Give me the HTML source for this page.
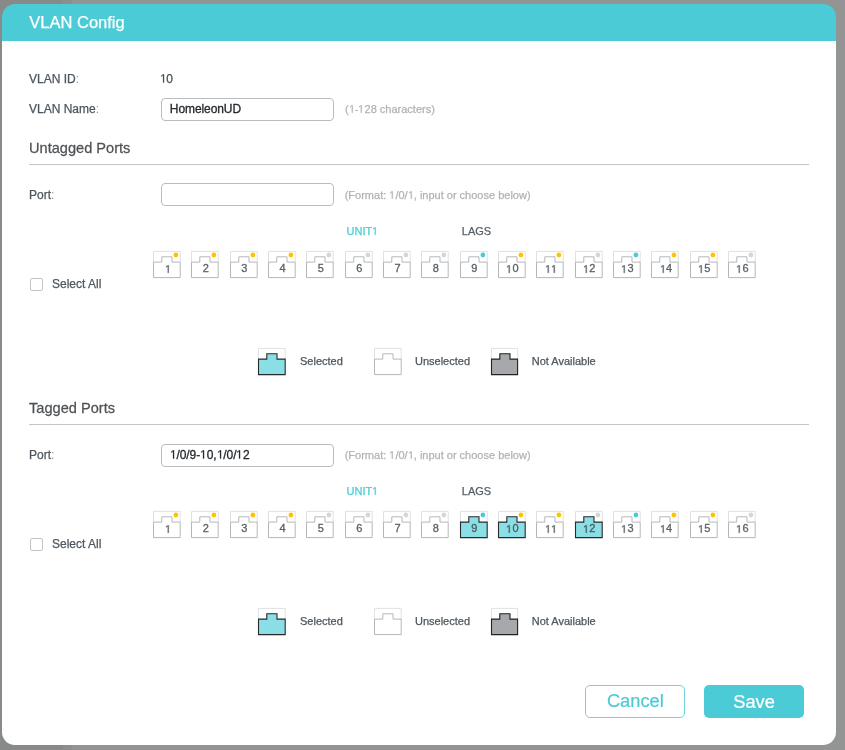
<!DOCTYPE html>
<html><head><meta charset="utf-8"><style>
html,body{margin:0;padding:0;width:845px;height:750px;overflow:hidden;background:#939594;font-family:"Liberation Sans",sans-serif}
.bgl{position:absolute;left:0;top:0;width:63px;height:750px;background:#888a89}
.bgm{position:absolute;left:63px;top:0;width:9px;height:750px;background:#8d8f8e}
.dlg{position:absolute;left:1.8px;top:4px;width:834.4px;height:741.3px}
.hdr{position:absolute;left:0;top:0;right:0;height:36.5px;background:#4acbd6;border-radius:13px 13px 0 0}
.bod{position:absolute;left:0;top:36.5px;right:0;bottom:0;background:#fff;border-radius:0 0 13px 13px}
.abs{position:absolute;left:0;top:0;width:845px;height:750px;will-change:transform}
.t{position:absolute;white-space:nowrap;line-height:1;-webkit-text-stroke:0.25px currentColor}
.title{font-size:16.5px;color:#fff}
.lbl{font-size:12px;color:#4d565e}
.val{font-size:12px;color:#434e56}
.head{font-size:14.6px;color:#4f5255;transform:scaleY(1.04);transform-origin:0 12.4px}
.hint{font-size:11px;color:#b0b3b6}
.unit{font-size:11px;color:#4acbd6}
.lags{font-size:11px;color:#555e66}
.leg{font-size:11px;color:#4d565e}
.line{position:absolute;left:29px;width:779.5px;height:1px;background:#c3c6c8}
.inp{position:absolute;left:161px;width:171px;height:21.2px;border:1px solid #b9bcbf;border-radius:4px;background:#fff}
.inp span{letter-spacing:-0.08px;-webkit-text-stroke:0.3px currentColor;position:absolute;left:7.8px;top:4.3px;font-size:12px;line-height:1;color:#252a2e;white-space:nowrap}
.cb{position:absolute;left:30px;width:10.5px;height:10.5px;border:1px solid #c2c5c8;border-radius:2px}
.p{position:absolute;overflow:visible}
.col{color:#8d959b;-webkit-text-stroke:0}
.pn{width:31.4px;text-align:center;font-size:11px;-webkit-text-stroke:0.3px currentColor}
.one{display:inline-block;vertical-align:baseline;overflow:visible}
.btn{position:absolute;top:685px;height:32.6px;border-radius:5px;box-sizing:border-box;font-size:18.3px;line-height:34.2px;text-align:center;-webkit-text-stroke:0.2px currentColor;text-indent:0.6px}
.cancel{line-height:30.4px;left:585.3px;width:99.5px;border:1.4px solid #6fd3dc;color:#4acbd6;background:#fff}
.save{left:703.7px;width:100.2px;background:#4acbd6;color:#fff}
</style></head><body>
<div class="bgl"></div><div class="bgm"></div>
<div class="dlg"><div class="hdr"></div><div class="bod"></div></div>
<div class="abs">
<div class="t title" style="left:29.3px;top:14px">VLAN Config</div>
<div class="t lbl" style="left:29px;top:73px">VLAN ID<span class="col">:</span></div>
<div class="t val" style="left:159.5px;top:73px"><svg class="one" viewBox="0 0 1139 1466" style="width:0.5562em;height:0.7158em"><path transform="matrix(1 0 0 -1 0 1466)" d="M515,0 L515,1237 L197,1010 L197,1180 L530,1409 L696,1409 L696,0 Z" fill="currentColor" stroke="currentColor" stroke-width="42.7"/></svg>0</div>
<div class="t lbl" style="left:29px;top:103px">VLAN Name<span class="col">:</span></div>
<div class="inp" style="top:98px"><span>HomeleonUD</span></div>
<div class="t hint" style="left:345px;top:103.7px">(<svg class="one" viewBox="0 0 1139 1466" style="width:0.5562em;height:0.7158em"><path transform="matrix(1 0 0 -1 0 1466)" d="M515,0 L515,1237 L197,1010 L197,1180 L530,1409 L696,1409 L696,0 Z" fill="currentColor" stroke="currentColor" stroke-width="46.5"/></svg>-<svg class="one" viewBox="0 0 1139 1466" style="width:0.5562em;height:0.7158em"><path transform="matrix(1 0 0 -1 0 1466)" d="M515,0 L515,1237 L197,1010 L197,1180 L530,1409 L696,1409 L696,0 Z" fill="currentColor" stroke="currentColor" stroke-width="46.5"/></svg>28 characters)</div>
<div class="t head" style="left:29px;top:141.3px">Untagged Ports</div><div class="line" style="top:164px"></div><div class="t lbl" style="left:29px;top:189px">Port<span class="col">:</span></div><div class="inp" style="top:183px"><span></span></div><div class="t hint" style="left:344.7px;top:189.5px">(Format: <svg class="one" viewBox="0 0 1139 1466" style="width:0.5562em;height:0.7158em"><path transform="matrix(1 0 0 -1 0 1466)" d="M515,0 L515,1237 L197,1010 L197,1180 L530,1409 L696,1409 L696,0 Z" fill="currentColor" stroke="currentColor" stroke-width="46.5"/></svg>/0/<svg class="one" viewBox="0 0 1139 1466" style="width:0.5562em;height:0.7158em"><path transform="matrix(1 0 0 -1 0 1466)" d="M515,0 L515,1237 L197,1010 L197,1180 L530,1409 L696,1409 L696,0 Z" fill="currentColor" stroke="currentColor" stroke-width="46.5"/></svg>, input or choose below)</div><div class="t unit" style="left:346.6px;top:225.8px">UNIT<svg class="one" viewBox="0 0 1139 1466" style="width:0.5562em;height:0.7158em"><path transform="matrix(1 0 0 -1 0 1466)" d="M515,0 L515,1237 L197,1010 L197,1180 L530,1409 L696,1409 L696,0 Z" fill="currentColor" stroke="currentColor" stroke-width="46.5"/></svg></div><div class="t lags" style="left:461.8px;top:225.8px">LAGS</div><svg class="p" style="left:151.90px;top:249.90px" width="30" height="30" viewBox="0 0 30 30"><path d="M1.5,12.1 V1.4 H28.2 V12.1" fill="none" stroke="#dfe1e3" stroke-width="1"/><path d="M1.5,12.1 H9.8 V6.8 H20.0 V12.1 H28.2 V27.6 H1.5 Z" fill="#ffffff" stroke="#b4b7ba" stroke-width="1.0"/><circle cx="23.9" cy="5.0" r="2.4" fill="#ffc400"/></svg><div class="t pn" style="left:151.90px;top:263.39px;color:#5a6268"><svg class="one" viewBox="0 0 1139 1466" style="width:0.5562em;height:0.7158em"><path transform="matrix(1 0 0 -1 0 1466)" d="M515,0 L515,1237 L197,1010 L197,1180 L530,1409 L696,1409 L696,0 Z" fill="currentColor" stroke="currentColor" stroke-width="55.9"/></svg></div><svg class="p" style="left:190.23px;top:249.90px" width="30" height="30" viewBox="0 0 30 30"><path d="M1.5,12.1 V1.4 H28.2 V12.1" fill="none" stroke="#dfe1e3" stroke-width="1"/><path d="M1.5,12.1 H9.8 V6.8 H20.0 V12.1 H28.2 V27.6 H1.5 Z" fill="#ffffff" stroke="#b4b7ba" stroke-width="1.0"/><circle cx="23.9" cy="5.0" r="2.4" fill="#ffc400"/></svg><div class="t pn" style="left:190.23px;top:263.39px;color:#5a6268">2</div><svg class="p" style="left:228.56px;top:249.90px" width="30" height="30" viewBox="0 0 30 30"><path d="M1.5,12.1 V1.4 H28.2 V12.1" fill="none" stroke="#dfe1e3" stroke-width="1"/><path d="M1.5,12.1 H9.8 V6.8 H20.0 V12.1 H28.2 V27.6 H1.5 Z" fill="#ffffff" stroke="#b4b7ba" stroke-width="1.0"/><circle cx="23.9" cy="5.0" r="2.4" fill="#ffc400"/></svg><div class="t pn" style="left:228.56px;top:263.39px;color:#5a6268">3</div><svg class="p" style="left:266.89px;top:249.90px" width="30" height="30" viewBox="0 0 30 30"><path d="M1.5,12.1 V1.4 H28.2 V12.1" fill="none" stroke="#dfe1e3" stroke-width="1"/><path d="M1.5,12.1 H9.8 V6.8 H20.0 V12.1 H28.2 V27.6 H1.5 Z" fill="#ffffff" stroke="#b4b7ba" stroke-width="1.0"/><circle cx="23.9" cy="5.0" r="2.4" fill="#ffc400"/></svg><div class="t pn" style="left:266.89px;top:263.39px;color:#5a6268">4</div><svg class="p" style="left:305.22px;top:249.90px" width="30" height="30" viewBox="0 0 30 30"><path d="M1.5,12.1 V1.4 H28.2 V12.1" fill="none" stroke="#dfe1e3" stroke-width="1"/><path d="M1.5,12.1 H9.8 V6.8 H20.0 V12.1 H28.2 V27.6 H1.5 Z" fill="#ffffff" stroke="#b4b7ba" stroke-width="1.0"/><circle cx="23.9" cy="5.0" r="2.4" fill="#d6d6d6"/></svg><div class="t pn" style="left:305.22px;top:263.39px;color:#5a6268">5</div><svg class="p" style="left:343.55px;top:249.90px" width="30" height="30" viewBox="0 0 30 30"><path d="M1.5,12.1 V1.4 H28.2 V12.1" fill="none" stroke="#dfe1e3" stroke-width="1"/><path d="M1.5,12.1 H9.8 V6.8 H20.0 V12.1 H28.2 V27.6 H1.5 Z" fill="#ffffff" stroke="#b4b7ba" stroke-width="1.0"/><circle cx="23.9" cy="5.0" r="2.4" fill="#d6d6d6"/></svg><div class="t pn" style="left:343.55px;top:263.39px;color:#5a6268">6</div><svg class="p" style="left:381.88px;top:249.90px" width="30" height="30" viewBox="0 0 30 30"><path d="M1.5,12.1 V1.4 H28.2 V12.1" fill="none" stroke="#dfe1e3" stroke-width="1"/><path d="M1.5,12.1 H9.8 V6.8 H20.0 V12.1 H28.2 V27.6 H1.5 Z" fill="#ffffff" stroke="#b4b7ba" stroke-width="1.0"/><circle cx="23.9" cy="5.0" r="2.4" fill="#d6d6d6"/></svg><div class="t pn" style="left:381.88px;top:263.39px;color:#5a6268">7</div><svg class="p" style="left:420.21px;top:249.90px" width="30" height="30" viewBox="0 0 30 30"><path d="M1.5,12.1 V1.4 H28.2 V12.1" fill="none" stroke="#dfe1e3" stroke-width="1"/><path d="M1.5,12.1 H9.8 V6.8 H20.0 V12.1 H28.2 V27.6 H1.5 Z" fill="#ffffff" stroke="#b4b7ba" stroke-width="1.0"/><circle cx="23.9" cy="5.0" r="2.4" fill="#d6d6d6"/></svg><div class="t pn" style="left:420.21px;top:263.39px;color:#5a6268">8</div><svg class="p" style="left:458.54px;top:249.90px" width="30" height="30" viewBox="0 0 30 30"><path d="M1.5,12.1 V1.4 H28.2 V12.1" fill="none" stroke="#dfe1e3" stroke-width="1"/><path d="M1.5,12.1 H9.8 V6.8 H20.0 V12.1 H28.2 V27.6 H1.5 Z" fill="#ffffff" stroke="#b4b7ba" stroke-width="1.0"/><circle cx="23.9" cy="5.0" r="2.4" fill="#4acbd6"/></svg><div class="t pn" style="left:458.54px;top:263.39px;color:#5a6268">9</div><svg class="p" style="left:496.87px;top:249.90px" width="30" height="30" viewBox="0 0 30 30"><path d="M1.5,12.1 V1.4 H28.2 V12.1" fill="none" stroke="#dfe1e3" stroke-width="1"/><path d="M1.5,12.1 H9.8 V6.8 H20.0 V12.1 H28.2 V27.6 H1.5 Z" fill="#ffffff" stroke="#b4b7ba" stroke-width="1.0"/><circle cx="23.9" cy="5.0" r="2.4" fill="#ffc400"/></svg><div class="t pn" style="left:496.87px;top:263.39px;color:#5a6268"><svg class="one" viewBox="0 0 1139 1466" style="width:0.5562em;height:0.7158em"><path transform="matrix(1 0 0 -1 0 1466)" d="M515,0 L515,1237 L197,1010 L197,1180 L530,1409 L696,1409 L696,0 Z" fill="currentColor" stroke="currentColor" stroke-width="55.9"/></svg>0</div><svg class="p" style="left:535.20px;top:249.90px" width="30" height="30" viewBox="0 0 30 30"><path d="M1.5,12.1 V1.4 H28.2 V12.1" fill="none" stroke="#dfe1e3" stroke-width="1"/><path d="M1.5,12.1 H9.8 V6.8 H20.0 V12.1 H28.2 V27.6 H1.5 Z" fill="#ffffff" stroke="#b4b7ba" stroke-width="1.0"/><circle cx="23.9" cy="5.0" r="2.4" fill="#ffc400"/></svg><div class="t pn" style="left:535.20px;top:263.39px;color:#5a6268"><svg class="one" viewBox="0 0 1139 1466" style="width:0.5562em;height:0.7158em"><path transform="matrix(1 0 0 -1 0 1466)" d="M515,0 L515,1237 L197,1010 L197,1180 L530,1409 L696,1409 L696,0 Z" fill="currentColor" stroke="currentColor" stroke-width="55.9"/></svg><svg class="one" viewBox="0 0 1139 1466" style="width:0.5562em;height:0.7158em"><path transform="matrix(1 0 0 -1 0 1466)" d="M515,0 L515,1237 L197,1010 L197,1180 L530,1409 L696,1409 L696,0 Z" fill="currentColor" stroke="currentColor" stroke-width="55.9"/></svg></div><svg class="p" style="left:573.53px;top:249.90px" width="30" height="30" viewBox="0 0 30 30"><path d="M1.5,12.1 V1.4 H28.2 V12.1" fill="none" stroke="#dfe1e3" stroke-width="1"/><path d="M1.5,12.1 H9.8 V6.8 H20.0 V12.1 H28.2 V27.6 H1.5 Z" fill="#ffffff" stroke="#b4b7ba" stroke-width="1.0"/><circle cx="23.9" cy="5.0" r="2.4" fill="#d6d6d6"/></svg><div class="t pn" style="left:573.53px;top:263.39px;color:#5a6268"><svg class="one" viewBox="0 0 1139 1466" style="width:0.5562em;height:0.7158em"><path transform="matrix(1 0 0 -1 0 1466)" d="M515,0 L515,1237 L197,1010 L197,1180 L530,1409 L696,1409 L696,0 Z" fill="currentColor" stroke="currentColor" stroke-width="55.9"/></svg>2</div><svg class="p" style="left:611.86px;top:249.90px" width="30" height="30" viewBox="0 0 30 30"><path d="M1.5,12.1 V1.4 H28.2 V12.1" fill="none" stroke="#dfe1e3" stroke-width="1"/><path d="M1.5,12.1 H9.8 V6.8 H20.0 V12.1 H28.2 V27.6 H1.5 Z" fill="#ffffff" stroke="#b4b7ba" stroke-width="1.0"/><circle cx="23.9" cy="5.0" r="2.4" fill="#4acbd6"/></svg><div class="t pn" style="left:611.86px;top:263.39px;color:#5a6268"><svg class="one" viewBox="0 0 1139 1466" style="width:0.5562em;height:0.7158em"><path transform="matrix(1 0 0 -1 0 1466)" d="M515,0 L515,1237 L197,1010 L197,1180 L530,1409 L696,1409 L696,0 Z" fill="currentColor" stroke="currentColor" stroke-width="55.9"/></svg>3</div><svg class="p" style="left:650.19px;top:249.90px" width="30" height="30" viewBox="0 0 30 30"><path d="M1.5,12.1 V1.4 H28.2 V12.1" fill="none" stroke="#dfe1e3" stroke-width="1"/><path d="M1.5,12.1 H9.8 V6.8 H20.0 V12.1 H28.2 V27.6 H1.5 Z" fill="#ffffff" stroke="#b4b7ba" stroke-width="1.0"/><circle cx="23.9" cy="5.0" r="2.4" fill="#ffc400"/></svg><div class="t pn" style="left:650.19px;top:263.39px;color:#5a6268"><svg class="one" viewBox="0 0 1139 1466" style="width:0.5562em;height:0.7158em"><path transform="matrix(1 0 0 -1 0 1466)" d="M515,0 L515,1237 L197,1010 L197,1180 L530,1409 L696,1409 L696,0 Z" fill="currentColor" stroke="currentColor" stroke-width="55.9"/></svg>4</div><svg class="p" style="left:688.52px;top:249.90px" width="30" height="30" viewBox="0 0 30 30"><path d="M1.5,12.1 V1.4 H28.2 V12.1" fill="none" stroke="#dfe1e3" stroke-width="1"/><path d="M1.5,12.1 H9.8 V6.8 H20.0 V12.1 H28.2 V27.6 H1.5 Z" fill="#ffffff" stroke="#b4b7ba" stroke-width="1.0"/><circle cx="23.9" cy="5.0" r="2.4" fill="#ffc400"/></svg><div class="t pn" style="left:688.52px;top:263.39px;color:#5a6268"><svg class="one" viewBox="0 0 1139 1466" style="width:0.5562em;height:0.7158em"><path transform="matrix(1 0 0 -1 0 1466)" d="M515,0 L515,1237 L197,1010 L197,1180 L530,1409 L696,1409 L696,0 Z" fill="currentColor" stroke="currentColor" stroke-width="55.9"/></svg>5</div><svg class="p" style="left:726.85px;top:249.90px" width="30" height="30" viewBox="0 0 30 30"><path d="M1.5,12.1 V1.4 H28.2 V12.1" fill="none" stroke="#dfe1e3" stroke-width="1"/><path d="M1.5,12.1 H9.8 V6.8 H20.0 V12.1 H28.2 V27.6 H1.5 Z" fill="#ffffff" stroke="#b4b7ba" stroke-width="1.0"/><circle cx="23.9" cy="5.0" r="2.4" fill="#d6d6d6"/></svg><div class="t pn" style="left:726.85px;top:263.39px;color:#5a6268"><svg class="one" viewBox="0 0 1139 1466" style="width:0.5562em;height:0.7158em"><path transform="matrix(1 0 0 -1 0 1466)" d="M515,0 L515,1237 L197,1010 L197,1180 L530,1409 L696,1409 L696,0 Z" fill="currentColor" stroke="currentColor" stroke-width="55.9"/></svg>6</div><div class="cb" style="top:278px"></div><div class="t lbl" style="left:52px;top:278.4px">Select All</div><svg class="p" style="left:256.90px;top:346.50px" width="30" height="30" viewBox="0 0 30 30"><path d="M1.5,12.1 V1.4 H28.2 V12.1" fill="none" stroke="#dfe1e3" stroke-width="1"/><path d="M1.5,12.1 H9.8 V6.8 H20.0 V12.1 H28.2 V27.6 H1.5 Z" fill="#8adfe6" stroke="#2a2a2a" stroke-width="1.1"/></svg><div class="t leg" style="left:300px;top:355.5px">Selected</div><svg class="p" style="left:372.90px;top:346.50px" width="30" height="30" viewBox="0 0 30 30"><path d="M1.5,12.1 V1.4 H28.2 V12.1" fill="none" stroke="#dfe1e3" stroke-width="1"/><path d="M1.5,12.1 H9.8 V6.8 H20.0 V12.1 H28.2 V27.6 H1.5 Z" fill="#ffffff" stroke="#b4b7ba" stroke-width="1.0"/></svg><div class="t leg" style="left:415px;top:355.5px">Unselected</div><svg class="p" style="left:489.90px;top:346.50px" width="30" height="30" viewBox="0 0 30 30"><path d="M1.5,12.1 V1.4 H27.6 V12.1" fill="none" stroke="#dfe1e3" stroke-width="1"/><path d="M1.5,12.1 H9.8 V6.8 H20.0 V12.1 H27.6 V27.6 H1.5 Z" fill="#a7a8ab" stroke="#222" stroke-width="1.1"/></svg><div class="t leg" style="left:531.7px;top:355.5px">Not Available</div>
<div class="t head" style="left:29px;top:401.3px">Tagged Ports</div><div class="line" style="top:424px"></div><div class="t lbl" style="left:29px;top:449px">Port<span class="col">:</span></div><div class="inp" style="top:443.5px"><span><svg class="one" viewBox="0 0 1139 1466" style="width:0.5562em;height:0.7158em"><path transform="matrix(1 0 0 -1 0 1466)" d="M515,0 L515,1237 L197,1010 L197,1180 L530,1409 L696,1409 L696,0 Z" fill="currentColor" stroke="currentColor" stroke-width="42.7"/></svg>/0/9-<svg class="one" viewBox="0 0 1139 1466" style="width:0.5562em;height:0.7158em"><path transform="matrix(1 0 0 -1 0 1466)" d="M515,0 L515,1237 L197,1010 L197,1180 L530,1409 L696,1409 L696,0 Z" fill="currentColor" stroke="currentColor" stroke-width="42.7"/></svg>0,<svg class="one" viewBox="0 0 1139 1466" style="width:0.5562em;height:0.7158em"><path transform="matrix(1 0 0 -1 0 1466)" d="M515,0 L515,1237 L197,1010 L197,1180 L530,1409 L696,1409 L696,0 Z" fill="currentColor" stroke="currentColor" stroke-width="42.7"/></svg>/0/<svg class="one" viewBox="0 0 1139 1466" style="width:0.5562em;height:0.7158em"><path transform="matrix(1 0 0 -1 0 1466)" d="M515,0 L515,1237 L197,1010 L197,1180 L530,1409 L696,1409 L696,0 Z" fill="currentColor" stroke="currentColor" stroke-width="42.7"/></svg>2</span></div><div class="t hint" style="left:344.7px;top:449.5px">(Format: <svg class="one" viewBox="0 0 1139 1466" style="width:0.5562em;height:0.7158em"><path transform="matrix(1 0 0 -1 0 1466)" d="M515,0 L515,1237 L197,1010 L197,1180 L530,1409 L696,1409 L696,0 Z" fill="currentColor" stroke="currentColor" stroke-width="46.5"/></svg>/0/<svg class="one" viewBox="0 0 1139 1466" style="width:0.5562em;height:0.7158em"><path transform="matrix(1 0 0 -1 0 1466)" d="M515,0 L515,1237 L197,1010 L197,1180 L530,1409 L696,1409 L696,0 Z" fill="currentColor" stroke="currentColor" stroke-width="46.5"/></svg>, input or choose below)</div><div class="t unit" style="left:346.6px;top:485.8px">UNIT<svg class="one" viewBox="0 0 1139 1466" style="width:0.5562em;height:0.7158em"><path transform="matrix(1 0 0 -1 0 1466)" d="M515,0 L515,1237 L197,1010 L197,1180 L530,1409 L696,1409 L696,0 Z" fill="currentColor" stroke="currentColor" stroke-width="46.5"/></svg></div><div class="t lags" style="left:461.8px;top:485.8px">LAGS</div><svg class="p" style="left:151.90px;top:509.90px" width="30" height="30" viewBox="0 0 30 30"><path d="M1.5,12.1 V1.4 H28.2 V12.1" fill="none" stroke="#dfe1e3" stroke-width="1"/><path d="M1.5,12.1 H9.8 V6.8 H20.0 V12.1 H28.2 V27.6 H1.5 Z" fill="#ffffff" stroke="#b4b7ba" stroke-width="1.0"/><circle cx="23.9" cy="5.0" r="2.4" fill="#ffc400"/></svg><div class="t pn" style="left:151.90px;top:523.39px;color:#5a6268"><svg class="one" viewBox="0 0 1139 1466" style="width:0.5562em;height:0.7158em"><path transform="matrix(1 0 0 -1 0 1466)" d="M515,0 L515,1237 L197,1010 L197,1180 L530,1409 L696,1409 L696,0 Z" fill="currentColor" stroke="currentColor" stroke-width="55.9"/></svg></div><svg class="p" style="left:190.23px;top:509.90px" width="30" height="30" viewBox="0 0 30 30"><path d="M1.5,12.1 V1.4 H28.2 V12.1" fill="none" stroke="#dfe1e3" stroke-width="1"/><path d="M1.5,12.1 H9.8 V6.8 H20.0 V12.1 H28.2 V27.6 H1.5 Z" fill="#ffffff" stroke="#b4b7ba" stroke-width="1.0"/><circle cx="23.9" cy="5.0" r="2.4" fill="#ffc400"/></svg><div class="t pn" style="left:190.23px;top:523.39px;color:#5a6268">2</div><svg class="p" style="left:228.56px;top:509.90px" width="30" height="30" viewBox="0 0 30 30"><path d="M1.5,12.1 V1.4 H28.2 V12.1" fill="none" stroke="#dfe1e3" stroke-width="1"/><path d="M1.5,12.1 H9.8 V6.8 H20.0 V12.1 H28.2 V27.6 H1.5 Z" fill="#ffffff" stroke="#b4b7ba" stroke-width="1.0"/><circle cx="23.9" cy="5.0" r="2.4" fill="#ffc400"/></svg><div class="t pn" style="left:228.56px;top:523.39px;color:#5a6268">3</div><svg class="p" style="left:266.89px;top:509.90px" width="30" height="30" viewBox="0 0 30 30"><path d="M1.5,12.1 V1.4 H28.2 V12.1" fill="none" stroke="#dfe1e3" stroke-width="1"/><path d="M1.5,12.1 H9.8 V6.8 H20.0 V12.1 H28.2 V27.6 H1.5 Z" fill="#ffffff" stroke="#b4b7ba" stroke-width="1.0"/><circle cx="23.9" cy="5.0" r="2.4" fill="#ffc400"/></svg><div class="t pn" style="left:266.89px;top:523.39px;color:#5a6268">4</div><svg class="p" style="left:305.22px;top:509.90px" width="30" height="30" viewBox="0 0 30 30"><path d="M1.5,12.1 V1.4 H28.2 V12.1" fill="none" stroke="#dfe1e3" stroke-width="1"/><path d="M1.5,12.1 H9.8 V6.8 H20.0 V12.1 H28.2 V27.6 H1.5 Z" fill="#ffffff" stroke="#b4b7ba" stroke-width="1.0"/><circle cx="23.9" cy="5.0" r="2.4" fill="#d6d6d6"/></svg><div class="t pn" style="left:305.22px;top:523.39px;color:#5a6268">5</div><svg class="p" style="left:343.55px;top:509.90px" width="30" height="30" viewBox="0 0 30 30"><path d="M1.5,12.1 V1.4 H28.2 V12.1" fill="none" stroke="#dfe1e3" stroke-width="1"/><path d="M1.5,12.1 H9.8 V6.8 H20.0 V12.1 H28.2 V27.6 H1.5 Z" fill="#ffffff" stroke="#b4b7ba" stroke-width="1.0"/><circle cx="23.9" cy="5.0" r="2.4" fill="#d6d6d6"/></svg><div class="t pn" style="left:343.55px;top:523.39px;color:#5a6268">6</div><svg class="p" style="left:381.88px;top:509.90px" width="30" height="30" viewBox="0 0 30 30"><path d="M1.5,12.1 V1.4 H28.2 V12.1" fill="none" stroke="#dfe1e3" stroke-width="1"/><path d="M1.5,12.1 H9.8 V6.8 H20.0 V12.1 H28.2 V27.6 H1.5 Z" fill="#ffffff" stroke="#b4b7ba" stroke-width="1.0"/><circle cx="23.9" cy="5.0" r="2.4" fill="#d6d6d6"/></svg><div class="t pn" style="left:381.88px;top:523.39px;color:#5a6268">7</div><svg class="p" style="left:420.21px;top:509.90px" width="30" height="30" viewBox="0 0 30 30"><path d="M1.5,12.1 V1.4 H28.2 V12.1" fill="none" stroke="#dfe1e3" stroke-width="1"/><path d="M1.5,12.1 H9.8 V6.8 H20.0 V12.1 H28.2 V27.6 H1.5 Z" fill="#ffffff" stroke="#b4b7ba" stroke-width="1.0"/><circle cx="23.9" cy="5.0" r="2.4" fill="#d6d6d6"/></svg><div class="t pn" style="left:420.21px;top:523.39px;color:#5a6268">8</div><svg class="p" style="left:458.54px;top:509.90px" width="30" height="30" viewBox="0 0 30 30"><path d="M1.5,12.1 V1.4 H28.2 V12.1" fill="none" stroke="#dfe1e3" stroke-width="1"/><path d="M1.5,12.1 H9.8 V6.8 H20.0 V12.1 H28.2 V27.6 H1.5 Z" fill="#8adfe6" stroke="#2a2a2a" stroke-width="1.1"/><circle cx="23.9" cy="5.0" r="2.4" fill="#4acbd6"/></svg><div class="t pn" style="left:458.54px;top:523.39px;color:#4a5a60">9</div><svg class="p" style="left:496.87px;top:509.90px" width="30" height="30" viewBox="0 0 30 30"><path d="M1.5,12.1 V1.4 H28.2 V12.1" fill="none" stroke="#dfe1e3" stroke-width="1"/><path d="M1.5,12.1 H9.8 V6.8 H20.0 V12.1 H28.2 V27.6 H1.5 Z" fill="#8adfe6" stroke="#2a2a2a" stroke-width="1.1"/><circle cx="23.9" cy="5.0" r="2.4" fill="#ffc400"/></svg><div class="t pn" style="left:496.87px;top:523.39px;color:#4a5a60"><svg class="one" viewBox="0 0 1139 1466" style="width:0.5562em;height:0.7158em"><path transform="matrix(1 0 0 -1 0 1466)" d="M515,0 L515,1237 L197,1010 L197,1180 L530,1409 L696,1409 L696,0 Z" fill="currentColor" stroke="currentColor" stroke-width="55.9"/></svg>0</div><svg class="p" style="left:535.20px;top:509.90px" width="30" height="30" viewBox="0 0 30 30"><path d="M1.5,12.1 V1.4 H28.2 V12.1" fill="none" stroke="#dfe1e3" stroke-width="1"/><path d="M1.5,12.1 H9.8 V6.8 H20.0 V12.1 H28.2 V27.6 H1.5 Z" fill="#ffffff" stroke="#b4b7ba" stroke-width="1.0"/><circle cx="23.9" cy="5.0" r="2.4" fill="#ffc400"/></svg><div class="t pn" style="left:535.20px;top:523.39px;color:#5a6268"><svg class="one" viewBox="0 0 1139 1466" style="width:0.5562em;height:0.7158em"><path transform="matrix(1 0 0 -1 0 1466)" d="M515,0 L515,1237 L197,1010 L197,1180 L530,1409 L696,1409 L696,0 Z" fill="currentColor" stroke="currentColor" stroke-width="55.9"/></svg><svg class="one" viewBox="0 0 1139 1466" style="width:0.5562em;height:0.7158em"><path transform="matrix(1 0 0 -1 0 1466)" d="M515,0 L515,1237 L197,1010 L197,1180 L530,1409 L696,1409 L696,0 Z" fill="currentColor" stroke="currentColor" stroke-width="55.9"/></svg></div><svg class="p" style="left:573.53px;top:509.90px" width="30" height="30" viewBox="0 0 30 30"><path d="M1.5,12.1 V1.4 H28.2 V12.1" fill="none" stroke="#dfe1e3" stroke-width="1"/><path d="M1.5,12.1 H9.8 V6.8 H20.0 V12.1 H28.2 V27.6 H1.5 Z" fill="#8adfe6" stroke="#2a2a2a" stroke-width="1.1"/><circle cx="23.9" cy="5.0" r="2.4" fill="#d6d6d6"/></svg><div class="t pn" style="left:573.53px;top:523.39px;color:#4a5a60"><svg class="one" viewBox="0 0 1139 1466" style="width:0.5562em;height:0.7158em"><path transform="matrix(1 0 0 -1 0 1466)" d="M515,0 L515,1237 L197,1010 L197,1180 L530,1409 L696,1409 L696,0 Z" fill="currentColor" stroke="currentColor" stroke-width="55.9"/></svg>2</div><svg class="p" style="left:611.86px;top:509.90px" width="30" height="30" viewBox="0 0 30 30"><path d="M1.5,12.1 V1.4 H28.2 V12.1" fill="none" stroke="#dfe1e3" stroke-width="1"/><path d="M1.5,12.1 H9.8 V6.8 H20.0 V12.1 H28.2 V27.6 H1.5 Z" fill="#ffffff" stroke="#b4b7ba" stroke-width="1.0"/><circle cx="23.9" cy="5.0" r="2.4" fill="#4acbd6"/></svg><div class="t pn" style="left:611.86px;top:523.39px;color:#5a6268"><svg class="one" viewBox="0 0 1139 1466" style="width:0.5562em;height:0.7158em"><path transform="matrix(1 0 0 -1 0 1466)" d="M515,0 L515,1237 L197,1010 L197,1180 L530,1409 L696,1409 L696,0 Z" fill="currentColor" stroke="currentColor" stroke-width="55.9"/></svg>3</div><svg class="p" style="left:650.19px;top:509.90px" width="30" height="30" viewBox="0 0 30 30"><path d="M1.5,12.1 V1.4 H28.2 V12.1" fill="none" stroke="#dfe1e3" stroke-width="1"/><path d="M1.5,12.1 H9.8 V6.8 H20.0 V12.1 H28.2 V27.6 H1.5 Z" fill="#ffffff" stroke="#b4b7ba" stroke-width="1.0"/><circle cx="23.9" cy="5.0" r="2.4" fill="#ffc400"/></svg><div class="t pn" style="left:650.19px;top:523.39px;color:#5a6268"><svg class="one" viewBox="0 0 1139 1466" style="width:0.5562em;height:0.7158em"><path transform="matrix(1 0 0 -1 0 1466)" d="M515,0 L515,1237 L197,1010 L197,1180 L530,1409 L696,1409 L696,0 Z" fill="currentColor" stroke="currentColor" stroke-width="55.9"/></svg>4</div><svg class="p" style="left:688.52px;top:509.90px" width="30" height="30" viewBox="0 0 30 30"><path d="M1.5,12.1 V1.4 H28.2 V12.1" fill="none" stroke="#dfe1e3" stroke-width="1"/><path d="M1.5,12.1 H9.8 V6.8 H20.0 V12.1 H28.2 V27.6 H1.5 Z" fill="#ffffff" stroke="#b4b7ba" stroke-width="1.0"/><circle cx="23.9" cy="5.0" r="2.4" fill="#ffc400"/></svg><div class="t pn" style="left:688.52px;top:523.39px;color:#5a6268"><svg class="one" viewBox="0 0 1139 1466" style="width:0.5562em;height:0.7158em"><path transform="matrix(1 0 0 -1 0 1466)" d="M515,0 L515,1237 L197,1010 L197,1180 L530,1409 L696,1409 L696,0 Z" fill="currentColor" stroke="currentColor" stroke-width="55.9"/></svg>5</div><svg class="p" style="left:726.85px;top:509.90px" width="30" height="30" viewBox="0 0 30 30"><path d="M1.5,12.1 V1.4 H28.2 V12.1" fill="none" stroke="#dfe1e3" stroke-width="1"/><path d="M1.5,12.1 H9.8 V6.8 H20.0 V12.1 H28.2 V27.6 H1.5 Z" fill="#ffffff" stroke="#b4b7ba" stroke-width="1.0"/><circle cx="23.9" cy="5.0" r="2.4" fill="#d6d6d6"/></svg><div class="t pn" style="left:726.85px;top:523.39px;color:#5a6268"><svg class="one" viewBox="0 0 1139 1466" style="width:0.5562em;height:0.7158em"><path transform="matrix(1 0 0 -1 0 1466)" d="M515,0 L515,1237 L197,1010 L197,1180 L530,1409 L696,1409 L696,0 Z" fill="currentColor" stroke="currentColor" stroke-width="55.9"/></svg>6</div><div class="cb" style="top:538px"></div><div class="t lbl" style="left:52px;top:538.4px">Select All</div><svg class="p" style="left:256.90px;top:606.50px" width="30" height="30" viewBox="0 0 30 30"><path d="M1.5,12.1 V1.4 H28.2 V12.1" fill="none" stroke="#dfe1e3" stroke-width="1"/><path d="M1.5,12.1 H9.8 V6.8 H20.0 V12.1 H28.2 V27.6 H1.5 Z" fill="#8adfe6" stroke="#2a2a2a" stroke-width="1.1"/></svg><div class="t leg" style="left:300px;top:615.5px">Selected</div><svg class="p" style="left:372.90px;top:606.50px" width="30" height="30" viewBox="0 0 30 30"><path d="M1.5,12.1 V1.4 H28.2 V12.1" fill="none" stroke="#dfe1e3" stroke-width="1"/><path d="M1.5,12.1 H9.8 V6.8 H20.0 V12.1 H28.2 V27.6 H1.5 Z" fill="#ffffff" stroke="#b4b7ba" stroke-width="1.0"/></svg><div class="t leg" style="left:415px;top:615.5px">Unselected</div><svg class="p" style="left:489.90px;top:606.50px" width="30" height="30" viewBox="0 0 30 30"><path d="M1.5,12.1 V1.4 H27.6 V12.1" fill="none" stroke="#dfe1e3" stroke-width="1"/><path d="M1.5,12.1 H9.8 V6.8 H20.0 V12.1 H27.6 V27.6 H1.5 Z" fill="#a7a8ab" stroke="#222" stroke-width="1.1"/></svg><div class="t leg" style="left:531.7px;top:615.5px">Not Available</div>
<div class="btn cancel">Cancel</div>
<div class="btn save">Save</div>
</div>
</body></html>
